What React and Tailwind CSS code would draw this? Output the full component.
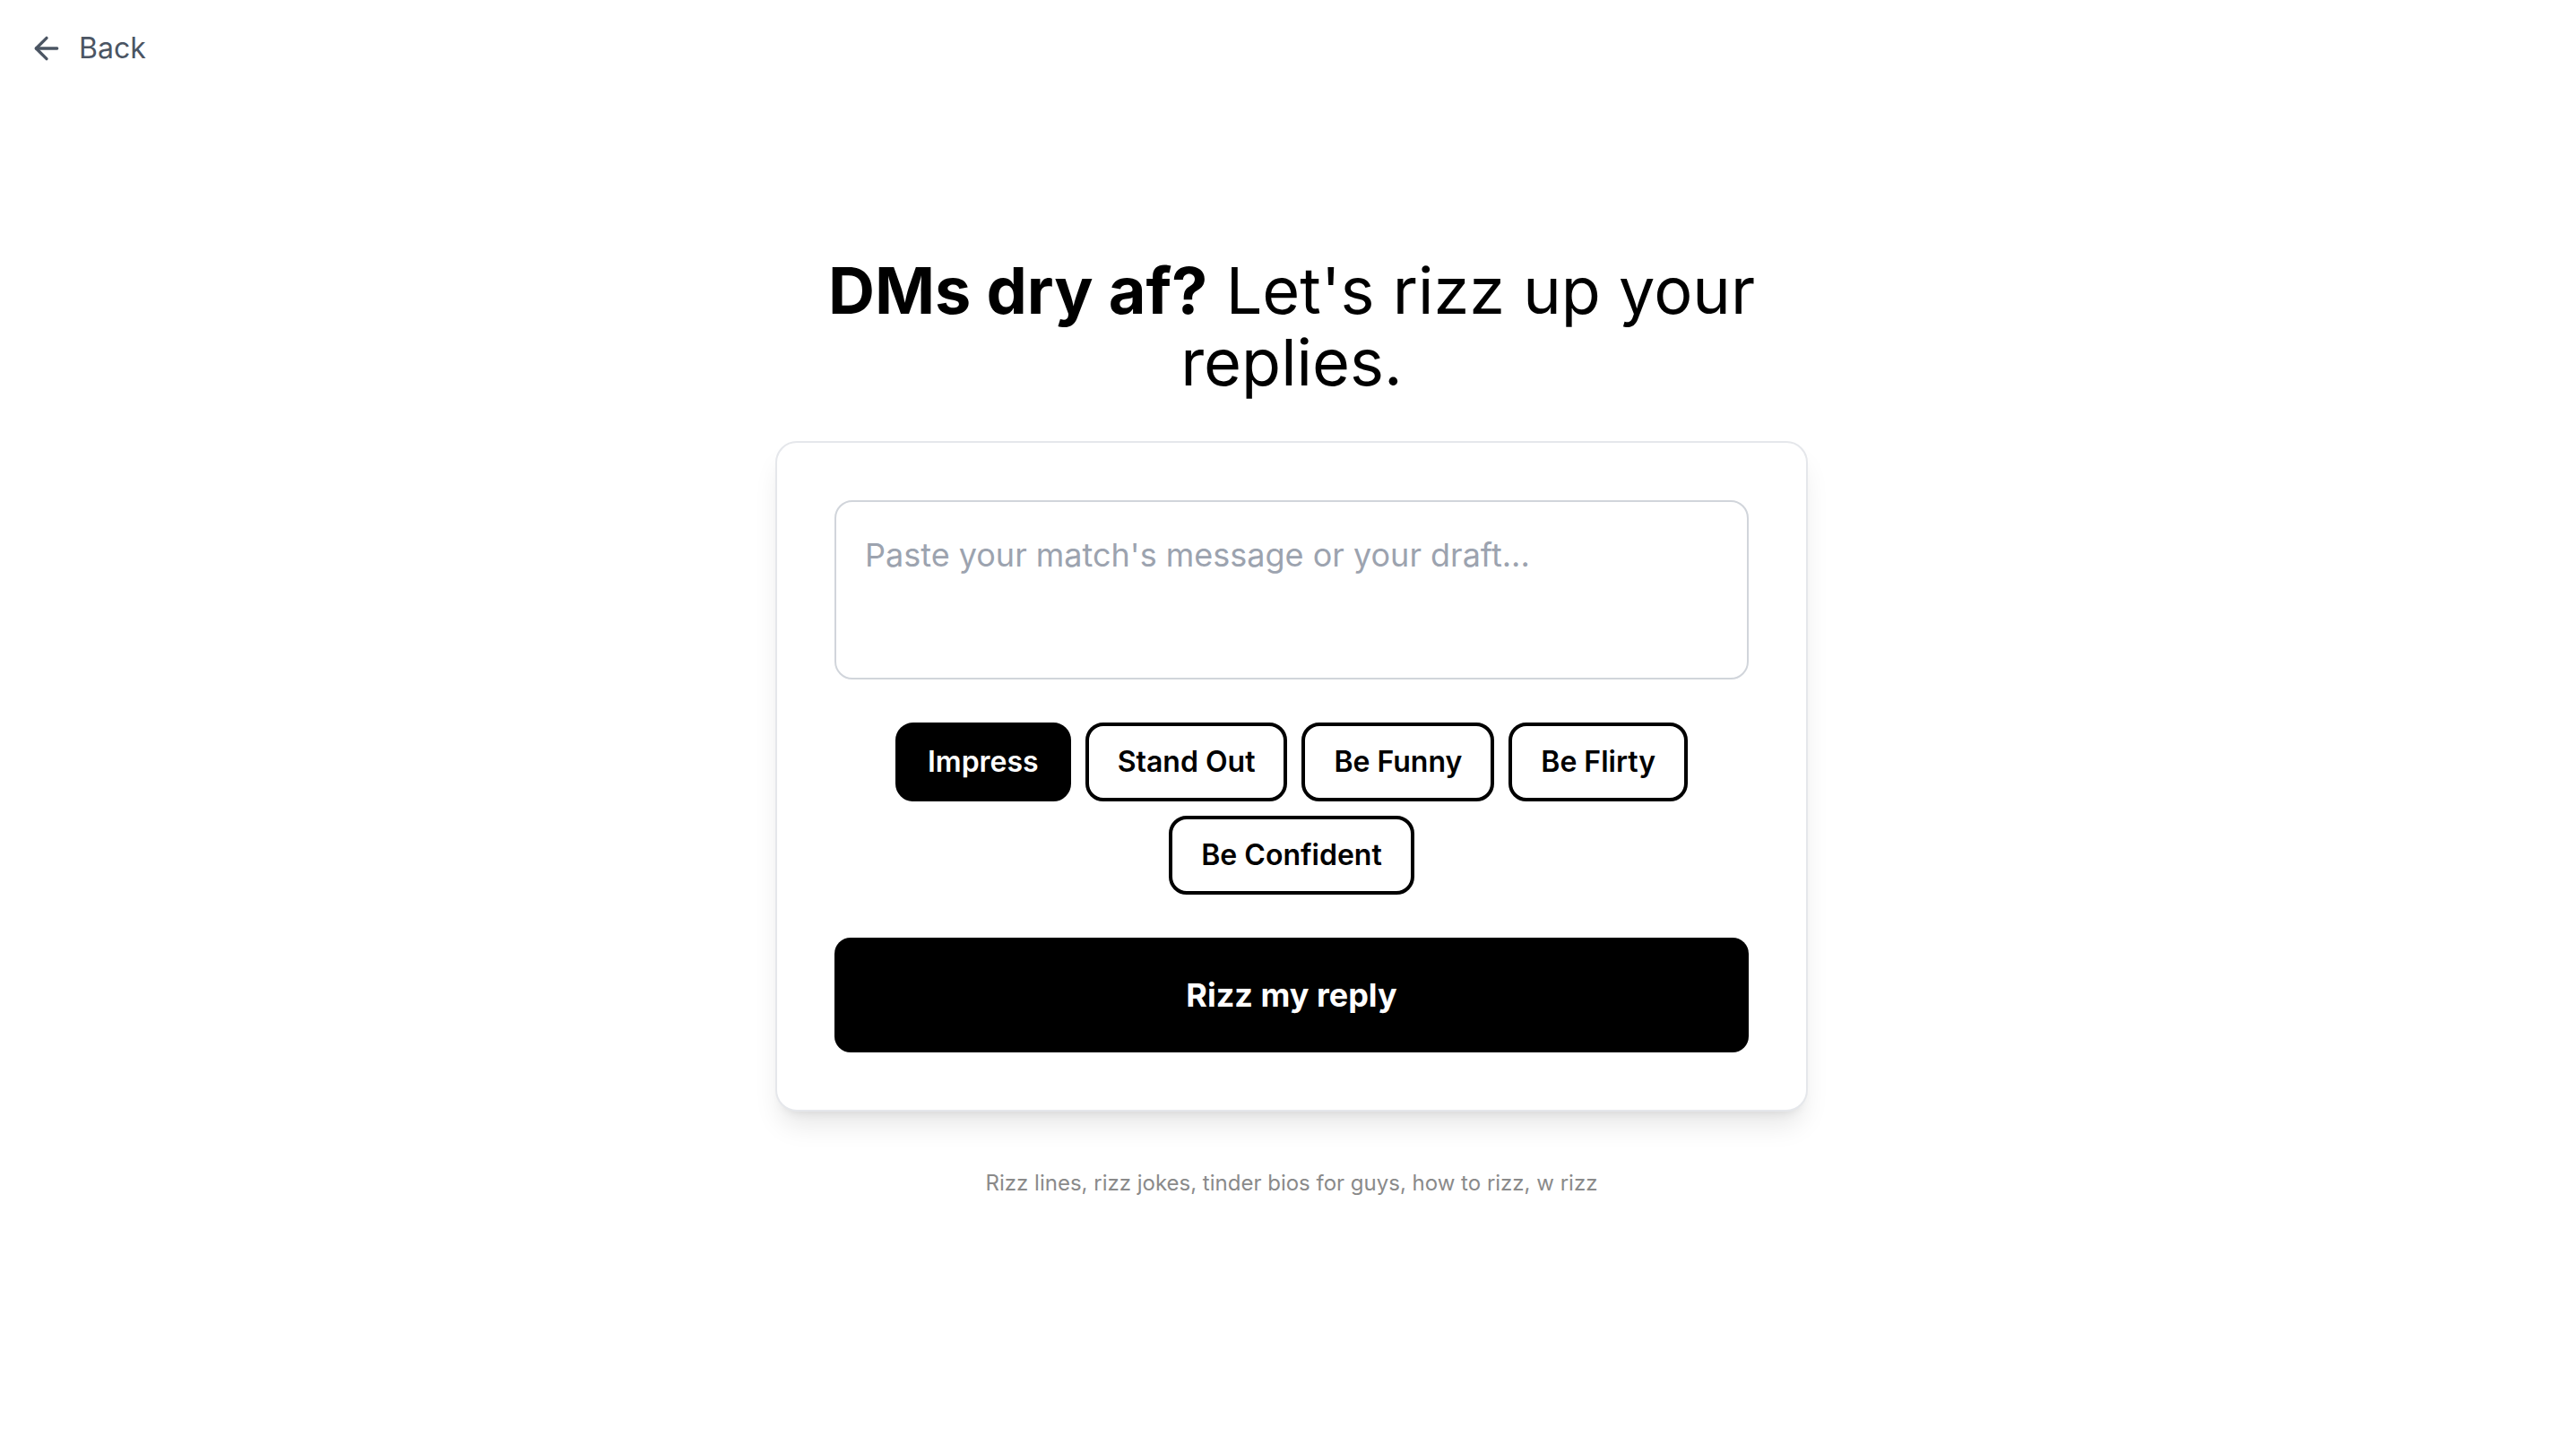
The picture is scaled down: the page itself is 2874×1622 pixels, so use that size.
import React from "react";
import { ArrowLeft } from "lucide-react";

const chips = ["Impress", "Stand Out", "Be Funny", "Be Flirty", "Be Confident"];

export default function App() {
  return (
    <div className="min-h-screen bg-white font-['Inter',sans-serif] text-black">
      <header className="px-[32px] pt-[30px]">
        <button className="flex items-center gap-[16px] text-[32px] leading-[48px] text-[#4b5563]">
          <ArrowLeft size={40} strokeWidth={2} />
          <span>Back</span>
        </button>
      </header>
      <div className="pl-[8px]">
        <main className="mx-auto flex w-[1152px] flex-col items-center pt-[206px]">
          <h1 className="text-center text-[72px] leading-[80px] font-normal text-black">
            <span className="font-bold">DMs dry af?</span> Let's rizz up your replies.
          </h1>
          <div className="mt-[48px] flex w-full flex-col gap-[48px] rounded-[24px] border-[2px] border-[#e5e7eb] bg-white p-[64px] shadow-[0_20px_30px_-6px_rgba(0,0,0,0.1),0_8px_12px_-8px_rgba(0,0,0,0.1)]">
            <textarea
              className="h-[200px] w-full resize-none rounded-[20px] border-[2px] border-[#d1d5db] px-[32px] pt-[31px] text-[36px] leading-[56px] text-black outline-none placeholder:text-[#9ca3af]"
              placeholder="Paste your match's message or your draft..."
            />
            <div className="flex flex-wrap justify-center gap-[16px]">
              {chips.map((c, i) => (
                <button
                  key={c}
                  className={
                    i === 0
                      ? "rounded-[20px] border-[4px] border-black bg-black px-[32px] py-[16px] text-[32px] leading-[48px] font-semibold text-white"
                      : "rounded-[20px] border-[4px] border-black bg-white px-[32px] py-[16px] text-[32px] leading-[48px] font-semibold text-black"
                  }
                >
                  {c}
                </button>
              ))}
            </div>
            <button className="h-[128px] w-full rounded-[18px] bg-black text-[36px] leading-[56px] font-bold text-white">
              Rizz my reply
            </button>
          </div>
          <p className="mt-[64px] text-center text-[24px] leading-[32px] text-[#8a8a8a]">
            Rizz lines, rizz jokes, tinder bios for guys, how to rizz, w rizz
          </p>
        </main>
      </div>
    </div>
  );
}
